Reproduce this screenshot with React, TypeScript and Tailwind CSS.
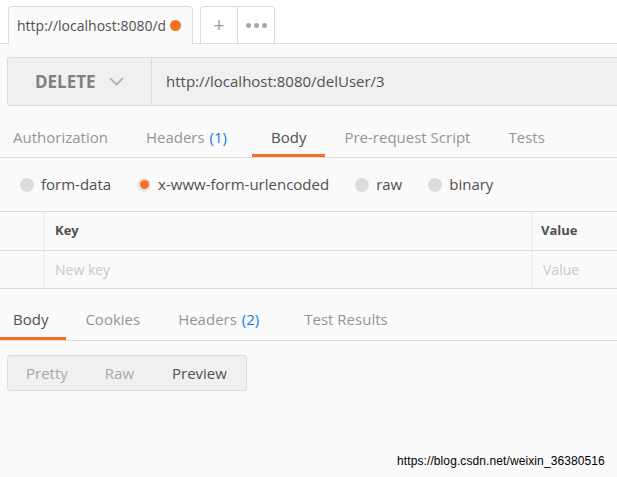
import React from "react";

const reqTabs = [
    { label: "Authorization", pl: "pl-[13px]", pr: "pr-[19px]" },
    { label: "Headers", count: "(1)", pl: "pl-[19px]", pr: "pr-[25px]" },
    { label: "Body", active: true, pl: "pl-[19px]", pr: "pr-[19px]" },
    { label: "Pre-request Script", pl: "pl-[19px]", pr: "pr-[20px]" },
    { label: "Tests", pl: "pl-[18px]", pr: "pr-[19px]" },
];

const resTabs = [
    { label: "Body", active: true, pl: "pl-[13px]", pr: "pr-[18px]" },
    { label: "Cookies", pl: "pl-[19px]", pr: "pr-[19px]" },
    { label: "Headers", count: "(2)", pl: "pl-[19px]", pr: "pr-[19px]" },
    { label: "Test Results", pl: "pl-[26px]", pr: "pr-[19px]" },
];

const radios = [
    { label: "form-data", ml: "ml-[20px]" },
    { label: "x-www-form-urlencoded", ml: "ml-[26px]", checked: true },
    { label: "raw", ml: "ml-[26px]" },
    { label: "binary", ml: "ml-[26px]" },
];

const Radio: React.FC<{ checked?: boolean }> = ({ checked }) => (
    <span
        className={`flex h-[14px] w-[14px] items-center justify-center rounded-full ${
            checked ? "bg-[#e5e5e5]" : "bg-[#dcdcdc]"
        }`}
    >
        {checked && <span className="h-[9px] w-[9px] rounded-full bg-[#f47023]" />}
    </span>
);

type Tab = { label: string; count?: string; active?: boolean; pl: string; pr: string };

const TabRow: React.FC<{ tabs: Tab[]; height: string }> = ({ tabs, height }) => (
    <div className={`flex border-b border-[#dcdcdc] ${height}`}>
        {tabs.map((t) => (
            <div
                key={t.label}
                className={`flex items-center border-b-[3px] text-[15px] ${t.pl} ${t.pr} ${
                    t.active ? "border-[#f47023] text-[#505050]" : "border-transparent text-[#959595]"
                }`}
            >
                {t.label}
                {t.count && <span className="ml-[5px] text-[#097bed]">{t.count}</span>}
            </div>
        ))}
    </div>
);

export default function App() {
    return (
        <div
            className="h-[477px] w-[617px] overflow-hidden bg-[#fafafa] text-[#505050]"
            style={{ fontFamily: '"Open Sans", sans-serif' }}
        >
            {/* open request tabs */}
            <div className="flex h-[44px] items-end gap-[7px] border-b border-[#dcdcdc] bg-white pl-[8px]">
                <div className="-mb-px flex h-[38px] w-[185px] items-center rounded-t-[4px] border border-b-0 border-[#dcdcdc] bg-[#fafafa] pl-[8px] pr-[11px]">
                    <span className="w-[148px] overflow-hidden whitespace-nowrap text-[14px] text-[#505050]">
                        http://localhost:8080/delUser/3
                    </span>
                    <span className="ml-auto h-[11px] w-[11px] shrink-0 rounded-full bg-[#f47023]" />
                </div>
                <div className="flex h-[37px] rounded-t-[4px] border border-b-0 border-[#dcdcdc] bg-white">
                    <div className="flex w-[37px] items-center justify-center border-r border-[#dcdcdc] text-[20px] leading-none text-[#9b9b9b]">
                        +
                    </div>
                    <div className="flex w-[36px] items-center justify-center gap-[3px]">
                        <span className="h-[5px] w-[5px] rounded-full bg-[#a8a8a8]" />
                        <span className="h-[5px] w-[5px] rounded-full bg-[#a8a8a8]" />
                        <span className="h-[5px] w-[5px] rounded-full bg-[#a8a8a8]" />
                    </div>
                </div>
            </div>

            {/* request bar */}
            <div className="ml-[7px] mt-[13px] flex h-[49px] rounded-l-[3px] border border-r-0 border-[#dcdcdc] bg-[#f0f0f0]">
                <div className="flex w-[144px] items-center border-r border-[#dcdcdc] pl-[27px]">
                    <span className="text-[17px] font-bold text-[#808080]">DELETE</span>
                    <svg className="ml-[13px]" width="15" height="9" viewBox="0 0 15 9">
                        <path d="M1 1l6.5 6.5L14 1" fill="none" stroke="#a8a8a8" strokeWidth="1.6" />
                    </svg>
                </div>
                <div className="flex items-center pl-[14px] text-[15px] text-[#505050]">
                    http://localhost:8080/delUser/3
                </div>
            </div>

            {/* request sub tabs */}
            <div className="mt-[14px]">
                <TabRow tabs={reqTabs} height="h-[38px]" />
            </div>

            {/* body type */}
            <div className="flex h-[53px] items-center text-[15px] text-[#505050]">
                {radios.map((r) => (
                    <label key={r.label} className={`flex items-center ${r.ml}`}>
                        <Radio checked={r.checked} />
                        <span className="ml-[7px]">{r.label}</span>
                    </label>
                ))}
            </div>

            {/* key/value table */}
            <div className="border-t border-[#dcdcdc] text-[13px]">
                <div className="flex h-[39px] border-b border-[#dcdcdc]">
                    <div className="w-[45px] border-r-2 border-[#f2f2f2]" />
                    <div className="flex flex-1 items-center border-r-2 border-[#f2f2f2] pl-[10px] font-bold text-[#505050]">
                        Key
                    </div>
                    <div className="flex w-[84px] items-center pl-[8px] font-bold text-[#505050]">Value</div>
                </div>
                <div className="flex h-[38px] border-b border-[#dcdcdc] text-[14px] text-[#c8c8c8]">
                    <div className="w-[45px] border-r-2 border-[#f2f2f2]" />
                    <div className="flex flex-1 items-center border-r-2 border-[#f2f2f2] pl-[10px]">New key</div>
                    <div className="flex w-[84px] items-center pl-[10px]">Value</div>
                </div>
            </div>

            {/* response tabs */}
            <div className="mt-[12px]">
                <TabRow tabs={resTabs} height="h-[40px]" />
            </div>

            <div className="ml-[7px] mt-[14px] flex h-[36px] w-[240px] items-center rounded-[3px] border border-[#dcdcdc] bg-[#f0f0f0] text-[15px]">
                <span className="ml-[18px] text-[#a8a8a8]">Pretty</span>
                <span className="ml-[37px] text-[#a8a8a8]">Raw</span>
                <span className="ml-[38px] text-[#505050]">Preview</span>
            </div>

            <div
                className="mt-[61px] pl-[397px] text-[12px] tracking-[0.1px] text-black"
                style={{ fontFamily: '"Liberation Sans", sans-serif' }}
            >
                https://blog.csdn.net/weixin_36380516
            </div>
        </div>
    );
}
